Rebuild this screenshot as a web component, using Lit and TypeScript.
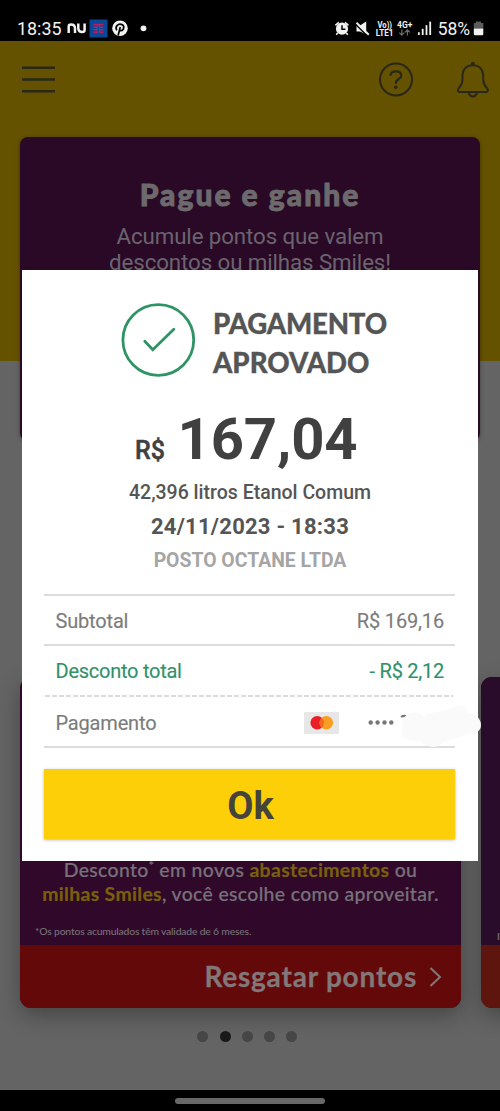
import { LitElement, html, css } from "lit";
import { customElement } from "lit/decorators.js";

@customElement("status-bar")
class StatusBar extends LitElement {
  static styles = css`
    :host { display: flex; height: 41px; background: #000; color: #f4f4f4; font-family: Roboto, sans-serif; }
    svg { display: block; }
  `;
  render() {
    return html`<svg width="500" height="41" viewBox="0 0 500 41" fill="#f2f2f2">
      <text x="17" y="35" font-size="19" textLength="44.5" lengthAdjust="spacingAndGlyphs">18:35</text>
      <g fill="none" stroke="#f2f2f2" stroke-width="2.5">
        <path d="M68.7 33V26.5Q68.7 24.5 71 24.5Q75 24.5 75 28.5V33"/>
        <path d="M78.3 23.5V28Q78.3 32 82.2 32Q84.6 32 84.6 30V23.5"/>
      </g>
      <rect x="89.5" y="19.5" width="18" height="18" fill="#0c4696"/>
      <g stroke="#b02464" stroke-width="1.5" fill="none">
        <path d="M93.5 24.6H103.3M93.5 27.2H97.6M99.2 27.2H103.3M93.5 29.8H97.6M99.2 29.8H103.3M93.5 32.2H97.6M99.2 32.2H103.3"/>
        <path d="M97.2 25V32M99.7 25V32" stroke-width=".8"/>
      </g>
      <circle cx="120" cy="28.3" r="7.8"/>
      <path d="M116.8 30.2Q115.2 27.6 117 25.6Q119 23.5 122 24.6Q124.6 26 123.4 29Q121.8 31.6 119.3 30M120.3 27L118.1 35.5" fill="none" stroke="#000" stroke-width="1.7"/>
      <circle cx="143.5" cy="28.3" r="2.9"/>
      <g>
        <circle cx="342" cy="28.7" r="6.1"/>
        <path d="M335.4 25.4L338.8 22.3M348.4 25.4L345 22.3M337.6 33L336.2 34.7M346.3 33L347.8 34.7" stroke="#f2f2f2" stroke-width="1.6"/>
        <path d="M342 25.2V29.2H345.4" fill="none" stroke="#000" stroke-width="1.5"/>
      </g>
      <path d="M356.5 25.5H360L366.2 21.5V34.5L360 31.5H356.5Z"/>
      <path d="M355.4 24L367.4 36" stroke="#000" stroke-width="1.6"/>
      <path d="M356.5 22.7L368.8 34.8" stroke="#f2f2f2" stroke-width="1.9"/>
      <text x="377.5" y="27.7" font-size="8.5" font-weight="700" textLength="14.5" lengthAdjust="spacingAndGlyphs">Vo))</text>
      <text x="375.7" y="35.6" font-size="9" font-weight="700" textLength="17.8" lengthAdjust="spacingAndGlyphs">LTE1</text>
      <text x="397" y="27.7" font-size="9" font-weight="700" textLength="15.3" lengthAdjust="spacingAndGlyphs">4G+</text>
      <g fill="none" stroke="#6d6d6d" stroke-width="1.2"><path d="M401.8 29.3V35M399.3 32.7L401.8 35.2L404.3 32.7M407.4 35.6V30M404.9 32.4L407.4 29.9L409.9 32.4"/></g>
      <rect x="418" y="32.2" width="1.7" height="2.8"/><rect x="421.8" y="28.8" width="1.8" height="6.2"/>
      <rect x="425.6" y="25.2" width="1.8" height="9.8"/><rect x="429.3" y="21.6" width="1.8" height="13.4"/>
      <text x="437.7" y="35" font-size="19" textLength="32.5" lengthAdjust="spacingAndGlyphs">58%</text>
      <path d="M476 21.5H481V23H483.3V28.5H473.8V23H476Z" fill="#5c5c5c"/>
      <path d="M473.8 28.5H483.3V34Q483.3 35.3 482 35.3H475Q473.8 35.3 473.8 34Z"/>
    </svg>`;
  }
}

@customElement("payment-dialog")
class PaymentDialog extends LitElement {
  static styles = css`
    :host { display: flex; flex-direction: column; box-sizing: border-box; width: 456px; height: 591px; padding: 33px 22px 22px;
      background: #fff; color: #555; font-family: Roboto, sans-serif; white-space: nowrap; }
    .head { display: flex; height: 74px; gap: 17px; padding-left: 77px; }
    .title { font: 900 27.6px/39px Lato, sans-serif; color: #555; margin-top: 1px; -webkit-text-stroke: .3px #555; }
    .title span { display: block; }
    .a { letter-spacing: -.2px; }
    .b { letter-spacing: 0; }
    .amount { display: flex; align-items: baseline; padding-left: 91px; gap: 12.5px; height: 72px; margin-top: 26px; color: #404040; font-weight: 700; }
    .cur { font-size: 25px; font-weight: 500; -webkit-text-stroke: .5px #404040; }
    .num { font-size: 58px; line-height: 72px; letter-spacing: -.1px; }
    .line { text-align: center; }
    .liters { font-size: 19.5px; line-height: 30px; margin-top: 3px; font-weight: 500; }
    .date { font-size: 22px; line-height: 34px; font-weight: 700; margin-top: 2px; letter-spacing: .25px; }
    .shop { font-size: 19.4px; line-height: 30px; font-weight: 700; color: #a5a5a5; margin-top: 2px; }
    .rows { width: 411px; margin-top: 18px; border-top: 2px solid #dcdcdc; }
    .row { display: flex; box-sizing: border-box; height: 50px; justify-content: space-between; align-items: center; padding: 2px 11px 0 11.5px; border-bottom: 2px solid #dcdcdc; font-size: 20px; letter-spacing: -.17px; color: #7c7c7c; -webkit-text-stroke: .15px #7c7c7c; }
    .green { color: #30916a; border: 0; height: 51px; padding-bottom: 3px; letter-spacing: -.25px; -webkit-text-stroke-color: #30916a;
      background: repeating-linear-gradient(90deg, #dcdcdc 0 4.5px, transparent 4.5px 7px) 1px 100% / 408px 2px no-repeat; }
    .pay { height: 51px; padding-right: 61px; padding-top: 2px; }
    .card { display: flex; gap: 29px; align-items: center; }
    svg { display: block; }
    .ok { display: flex; align-items: center; justify-content: center; height: 70px; margin-top: 21px; width: 411px; border: 0; padding: 4px 0 0 2px;
      background: #fccf08; color: #45443b; font: 700 38px Roboto, sans-serif; box-shadow: 0 1px 3px rgba(0,0,0,.3); }
  `;
  render() {
    return html`
      <div class="head">
        <svg width="75" height="74" viewBox="0 0 75 74" fill="none" stroke="#2f9465">
          <circle cx="37.3" cy="37" r="35.4" stroke-width="2.8"/>
          <path d="M23.8 38.3L31.8 46.7L52.8 26.2" stroke-width="2.8" stroke-linecap="round"/>
        </svg>
        <div class="title"><span class="a">PAGAMENTO</span><span class="b">APROVADO</span></div>
      </div>
      <div class="amount"><span class="cur">R$</span><span class="num">167,04</span></div>
      <div class="line liters">42,396 litros Etanol Comum</div>
      <div class="line date">24/11/2023 - 18:33</div>
      <div class="line shop">POSTO OCTANE LTDA</div>
      <div class="rows">
        <div class="row"><span>Subtotal</span><span>R$ 169,16</span></div>
        <div class="row green"><span>Desconto total</span><span>- R$ 2,12</span></div>
        <div class="row pay"><span>Pagamento</span>
          <span class="card">
            <svg width="35" height="22" viewBox="0 0 35 22"><rect width="35" height="22" rx="1" fill="#e7e7e7"/>
              <circle cx="13.2" cy="10.7" r="6.8" fill="#e91f27"/><circle cx="22.3" cy="10.7" r="6.8" fill="#f89e22"/>
              <path d="M17.75 5.65A6.8 6.8 0 0 1 17.75 15.75A6.8 6.8 0 0 1 17.75 5.65Z" fill="#f2681f"/></svg>
            <svg width="26" height="8" viewBox="0 0 26 8" fill="#777"><circle cx="2.7" cy="3.5" r="2.2"/><circle cx="9.6" cy="3.5" r="2.2"/><circle cx="16.5" cy="3.5" r="2.2"/><circle cx="23.3" cy="3.5" r="2.2"/></svg>
          </span></div>
      </div>
      <button class="ok">Ok</button>`;
  }
}

@customElement("app-root")
class AppRoot extends LitElement {
  static styles = css`
    :host { display: flex; flex-direction: column; position: relative; width: 500px; height: 1111px; overflow: hidden; background: #646464; font-family: Roboto, sans-serif; white-space: nowrap; }
    svg { display: block; }
    .hero { box-sizing: border-box; height: 400px; padding: 0 20px; background: linear-gradient(#655200 320px, transparent 320px); }
    .bar { display: flex; justify-content: space-between; height: 96px; margin: 0 -20px; }
    .promo { box-sizing: border-box; width: 460px; height: 304px; background: #290925; border-radius: 8px; text-align: center; padding-top: 37px; color: #6b6470; box-shadow: 0 1px 4px rgba(0,0,0,.35); }
    .promo h2 { margin: 0; font: 900 30px/40px Lato, sans-serif; color: #6c6a6d; letter-spacing: 2px; -webkit-text-stroke: .9px #6c6a6d; }
    .promo p { margin: 9px 0 0; font-size: 22.3px; line-height: 26px; letter-spacing: -.1px; }
    .cards { display: flex; gap: 20px; margin: 236px 0 0 20px; height: 331px; }
    .card { flex: none; display: flex; flex-direction: column; width: 441px; height: 331px; border-radius: 11px; overflow: hidden; background: #300829; }
    .shade { flex: none; border-radius: 11px; box-shadow: 0 8px 22px rgba(0,0,0,.3); }
    .copy { box-sizing: border-box; height: 268px; padding-top: 181px; font: 500 19.4px/24px Lato, sans-serif; letter-spacing: .35px; color: #77717a; text-align: center; -webkit-text-stroke: .2px; }
    .copy b { color: #79610b; }
    sup { font-size: 12px; line-height: 0; vertical-align: 7px; }
    .note { text-align: left; font-size: 10.4px; line-height: 16px; letter-spacing: -.2px; padding: 17px 0 0 15px; -webkit-text-stroke: 0; }
    .redeem { display: flex; align-items: center; justify-content: flex-end; gap: 12px; height: 63px; padding-right: 19px; background: #640909; color: #827779; font: 700 28px/63px Lato, sans-serif; letter-spacing: .8px; -webkit-text-stroke: .3px #827779; }
    .next .copy { background: #290c29; text-align: left; padding-top: 251px; font-size: 10px; line-height: 16px; padding-left: 16px; }
    .next .redeem { background: #5d150d; }
    .dots { display: flex; gap: 11.2px; justify-content: center; margin: 22.5px 5.5px 0 0; }
    .dot { width: 11px; height: 11px; border-radius: 50%; background: #464646; }
    .on { background: #191919; }
    .nav { display: flex; justify-content: center; align-items: center; height: 21px; margin-top: auto; background: #000; }
    .pill { width: 150px; height: 6px; border-radius: 3px; background: #686868; }
    .dialog { position: absolute; left: 22px; top: 270px; }
    .smudge { position: absolute; left: 395px; top: 700px; }
  `;
  render() {
    return html`
      <status-bar></status-bar>
      <div class="hero">
        <div class="bar">
          <svg width="70" height="70" viewBox="0 41 70 70" fill="none" stroke="#292819" stroke-width="2.4"><path d="M22 67.8H55M22 79.5H55M22 91.3H55"/></svg>
          <svg width="130" height="70" viewBox="370 41 130 70" fill="none" stroke="#292819" stroke-width="2">
            <circle cx="396" cy="79.5" r="16"/>
            <path d="M390.4 75.7Q390.6 71.4 395.9 71.4Q401.2 71.5 401.2 75.5Q401.2 77.7 398.5 79.3Q395.8 80.8 395.8 83.7" stroke-width="2.3"/>
            <circle cx="395.8" cy="87.3" r="1.8" fill="#292819" stroke="none"/>
            <path d="M472.8 65.2C466.3 65.2 462.8 69.5 462.5 75V79Q462.5 84 459.6 87Q457.2 89.7 458.2 91.3Q458.7 92 460.2 92H485.5Q487 92 487.6 91.3Q488.6 89.7 486 87Q483.2 84 483.2 79V75C482.8 69.5 479.3 65.2 472.8 65.2Z"/>
            <path d="M468.8 92.5Q469.3 96.4 472.8 96.4Q476.3 96.4 476.8 92.5"/>
            <circle cx="472.8" cy="63.7" r="2" fill="#292819" stroke="none"/>
          </svg>
        </div>
        <div class="promo"><h2>Pague e ganhe</h2><p>Acumule pontos que valem<br>descontos ou milhas Smiles!</p></div>
      </div>
      <div class="cards">
        <div class="shade"><div class="card">
          <div class="copy"><div>Desconto<sup>*</sup> em novos <b>abastecimentos</b> ou</div><div><b>milhas Smiles</b>, você escolhe como aproveitar.</div>
            <div class="note">*Os pontos acumulados têm validade de 6 meses.</div></div>
          <div class="redeem"><span>Resgatar pontos</span><svg width="13" height="20" viewBox="0 0 13 20" fill="none" stroke="#827779" stroke-width="2"><path d="M1.5 1L11 10L1.5 19"/></svg></div>
        </div></div>
        <div class="shade"><div class="card next"><div class="copy">I</div><div class="redeem"></div></div></div>
      </div>
      <div class="dots">${[0, 1, 2, 3, 4].map((i) => html`<span class="dot ${i === 1 ? "on" : ""}"></span>`)}</div>
      <div class="nav"><span class="pill"></span></div>
      <payment-dialog class="dialog"></payment-dialog>
      <svg class="smudge" width="90" height="52" viewBox="395 700 90 52">
        <path d="M401 717Q403 715.5 406 716" stroke="#777" stroke-width="2" fill="none"/><path d="M427 715.5H431" stroke="#999" stroke-width="1.5"/>
        <path d="M402 727C401 716 410 711 418 713Q422 714 423 717C433 710 447 712 457 706Q468 704 468 714C474 713 481 718 481 725C481 733 473 733 466 735Q455 738 443 742C441 749 425 748 422 742Q415 741 409 740Q400 738 402 727Z" fill="#fafafa"/>
      </svg>`;
  }
}
